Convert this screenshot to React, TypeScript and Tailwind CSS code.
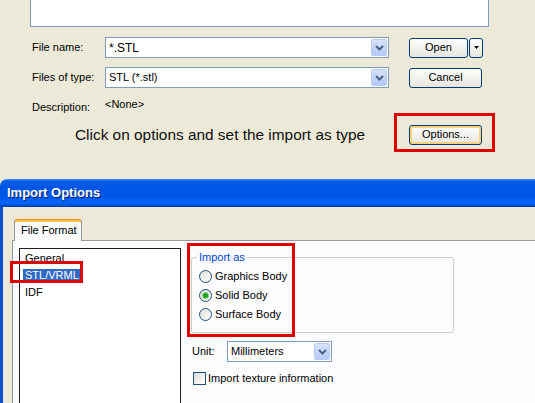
import React from 'react';

const ChevronButton: React.FC = () => (
  <div className="w-[16px] h-full rounded-[2px] border border-[#B9CBF3] bg-gradient-to-b from-[#D8E3FC] to-[#B4C8F6] flex items-center justify-center">
    <svg width="9" height="6" viewBox="0 0 9 6">
      <path d="M1 1 L4.5 4.5 L8 1" stroke="#4D6185" strokeWidth="2" fill="none" />
    </svg>
  </div>
);

const ComboBox: React.FC<{ value: string; width: string; textSize?: string }> = ({ value, width, textSize = 'text-[11px]' }) => (
  <div className={`${width} h-[21px] bg-white border border-[#7F9DB9] flex items-stretch p-[1px]`}>
    <span className={`flex-1 pl-[2px] flex items-center text-black ${textSize}`}>{value}</span>
    <ChevronButton />
  </div>
);

const XpButton: React.FC<{ label: string; width: string; focused?: boolean }> = ({ label, width, focused }) => (
  <div
    className={`${width} h-[20px] rounded-[3px] border border-[#003C74] bg-gradient-to-b from-white to-[#E6E5DE] flex items-center justify-center text-[11px] text-black ${
      focused ? 'shadow-[inset_0_0_0_2px_#F8D27C]' : ''
    }`}
  >
    {label}
  </div>
);

const Radio: React.FC<{ label: string; checked?: boolean }> = ({ label, checked }) => (
  <div className="flex items-center h-[19px] gap-[3px]">
    <div className="w-[13px] h-[13px] rounded-full border border-[#1C5180] bg-gradient-to-br from-[#DCDCD7] to-white flex items-center justify-center">
      {checked && <div className="w-[5px] h-[5px] rounded-full bg-[#21A121] shadow-[0_0_0_1px_#8CD68C]" />}
    </div>
    <span className="text-[11px] text-black">{label}</span>
  </div>
);

const RedBox: React.FC<{ className: string }> = ({ className }) => (
  <div className={`absolute border-[3px] border-[#E10000] ${className}`} />
);

export default function App() {
  return (
    <div className="relative w-[535px] h-[403px] overflow-hidden bg-[#ECE9D8] font-['Liberation_Sans',Arial,sans-serif] text-black">
      {/* Open dialog (top) */}
      <div className="h-[179px]">
        <div className="ml-[30px] w-[459px] h-[27px] bg-white border border-t-0 border-[#7F9DB9]" />

        <div className="flex items-center h-[21px] mt-[10px]">
          <span className="w-[105px] pl-[32px] text-[11px]">File name:</span>
          <ComboBox value="*.STL" width="w-[284px]" textSize="text-[12px]" />
          <div className="ml-[20px] flex gap-[1px]">
            <XpButton label="Open" width="w-[59px]" />
            <div className="w-[14px] h-[20px] rounded-[3px] border border-[#003C74] bg-gradient-to-b from-white to-[#E6E5DE] flex items-center justify-center">
              <svg width="5" height="3" viewBox="0 0 5 3">
                <path d="M0 0 H5 L2.5 3 Z" fill="#000" />
              </svg>
            </div>
          </div>
        </div>

        <div className="flex items-center h-[21px] mt-[9px]">
          <span className="w-[105px] pl-[32px] text-[11px]">Files of type:</span>
          <ComboBox value="STL (*.stl)" width="w-[284px]" />
          <div className="ml-[20px]">
            <XpButton label="Cancel" width="w-[73px]" />
          </div>
        </div>

        <div className="flex items-center h-[14px] mt-[9px]">
          <span className="w-[105px] pl-[32px] text-[11px] translate-y-[3px]">Description:</span>
          <span className="text-[11px]">&lt;None&gt;</span>
        </div>

        <div className="flex items-center h-[21px] mt-[13px]">
          <span className="w-[409px] pl-[75px] text-[15.4px] text-[#111]">Click on options and set the import as type</span>
          <XpButton label="Options..." width="w-[73px]" focused />
        </div>
      </div>

      {/* Import Options window (bottom) */}
      <div className="h-[224px] flex flex-col">
        <div className="h-[28px] rounded-tl-[7px] bg-[linear-gradient(to_bottom,#3D95FF_0px,#0A5FEA_2px,#0055E5_8px,#0058E8_18px,#0066FF_24px,#0050D8_26px,#003DB0_28px)] flex items-center pl-[7px]">
          <span className="text-[13px] font-bold text-white [text-shadow:1px_1px_0_#0A1E6E]">Import Options</span>
        </div>

        <div className="flex-1 border-l-[3px] border-[#0751DA] bg-[#ECE9D8] pt-[12px] flex flex-col">
          <div className="ml-[11px] flex">
            <div className="w-[68px] h-[22px] -mb-[1px] relative z-10 rounded-t-[3px] border border-b-0 border-[#919B9C] border-t-[#E68B2C] bg-[#FCFCFE] shadow-[inset_0_2px_0_#FFC73C] flex items-center pl-[6px] text-[11px]">
              File Format
            </div>
          </div>

          <div className="ml-[9px] flex-1 border border-r-0 border-b-0 border-[#919B9C] bg-[#FCFCFE] flex pt-[7px] pl-[6px]">
            <div className="w-[162px] border border-b-0 border-[#1E1E1E] bg-white flex flex-col pt-[1px] pl-[3px] text-[11px]">
              <div className="h-[17px] flex items-center pl-[2px]">General</div>
              <div className="h-[17px] flex items-center">
                <span className="bg-[#316AC5] text-white px-[2px] leading-[13px]">STL/VRML</span>
              </div>
              <div className="h-[17px] flex items-center pl-[2px]">IDF</div>
            </div>

            <div className="ml-[10px] pt-[9px] flex flex-col">
              <div className="relative w-[263px] h-[76px] rounded-[3px] border border-[#D0D0BF] pt-[9px] pl-[7px]">
                <span className="absolute -top-[7px] left-[5px] bg-[#FCFCFE] px-[2px] text-[11px] text-[#0046D5] leading-[13px]">Import as</span>
                <Radio label="Graphics Body" />
                <Radio label="Solid Body" checked />
                <Radio label="Surface Body" />
              </div>

              <div className="flex items-center mt-[8px] h-[21px] pl-[1px]">
                <span className="w-[35px] text-[11px]">Unit:</span>
                <ComboBox value="Millimeters" width="w-[105px]" />
              </div>

              <div className="flex items-center mt-[8px] pl-[2px] gap-[2px]">
                <div className="w-[13px] h-[13px] border border-[#1C5180] bg-gradient-to-br from-[#DCDCD7] to-white" />
                <span className="text-[11px]">Import texture information</span>
              </div>
            </div>
          </div>
        </div>
      </div>

      {/* annotation boxes */}
      <RedBox className="left-[394px] top-[113px] w-[101px] h-[39px]" />
      <RedBox className="left-[10px] top-[261px] w-[73px] h-[22px]" />
      <RedBox className="left-[187px] top-[243px] w-[108px] h-[94px]" />
    </div>
  );
}
